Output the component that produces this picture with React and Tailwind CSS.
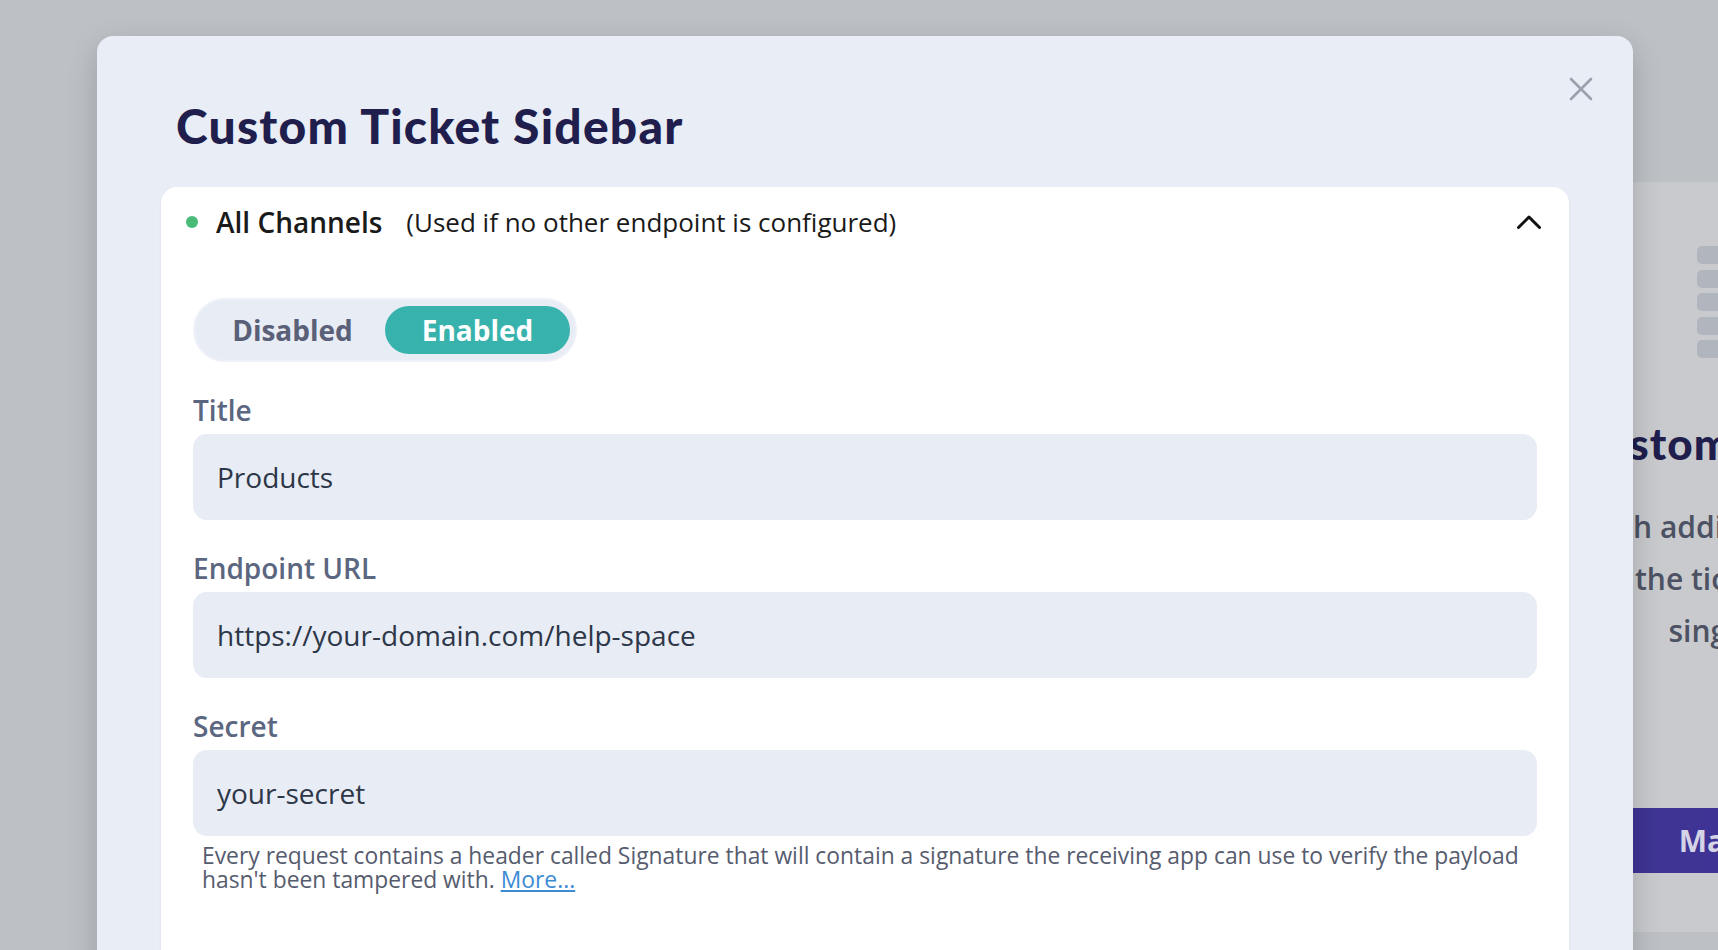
import React, { useState } from 'react';

const sans = { fontFamily: '"Open Sans", "Noto Sans", sans-serif' };
const heavy = { fontFamily: 'Lato, "Open Sans", sans-serif' };

function Field({ label, value, children }) {
  return (
    <div className="mt-7 flex flex-col">
      <label className="text-[28px] font-semibold leading-[40px] text-[#5b6680]">{label}</label>
      <div className="mt-1 flex h-[86px] items-center rounded-[14px] bg-[#e8ecf5] px-6 text-[28px] text-[#2d3748]">
        {value}
      </div>
      {children}
    </div>
  );
}

function BackgroundPage() {
  return (
    <div className="flex pl-[1420px] pt-[182px]">
      <div className="flex h-[750px] w-[772px] shrink-0 flex-col items-center rounded-2xl bg-[#c9cacd] pt-[64px] text-center">
        {/* illustration */}
        <div className="flex w-[218px] flex-col gap-[5.5px]">
          <div className="h-[18px] rounded-[5px] bg-[#b1b5bd]" />
          <div className="h-[18px] rounded-[5px] bg-[#b1b5bd]" />
          <div className="h-[18px] rounded-[5px] bg-[#b1b5bd]" />
          <div className="h-[18px] rounded-[5px] bg-[#b1b5bd]" />
          <div className="h-[18px] rounded-[5px] bg-[#b1b5bd]" />
        </div>
        <h3
          className="mt-[59px] whitespace-nowrap text-[44px] font-black leading-[1.2] tracking-[0.025em] text-[#1f1e4d]"
          style={heavy}
        >
          Custom Ticket Sidebar
        </h3>
        <p className="mt-[31px] text-[30px] font-semibold leading-[52px] text-[#4c5263]" style={sans}>
          <span className="block whitespace-nowrap">Enrich additional ticket data here{'\u00a0'}</span>
          <span className="block whitespace-nowrap">shown in the ticket sidebar for every agent</span>
          <span className="block whitespace-nowrap">single API request.{'\u00a0'}</span>
        </p>
        <button
          className="mt-[151px] flex h-[65px] w-full items-center justify-center bg-gradient-to-r from-[#3c3690] to-[#44309d] text-[30px] font-bold text-[#d5d3e6]"
          style={sans}
        >
          Manage Sidebars
        </button>
      </div>
    </div>
  );
}

export default function App() {
  const [enabled, setEnabled] = useState(true);

  return (
    <div className="relative h-[950px] w-full overflow-hidden bg-[#bdc1c6]" style={sans}>
      <BackgroundPage />

      {/* Modal */}
      <div className="absolute inset-0 flex justify-center pl-[12px] pt-[36px]">
        <div className="relative h-fit w-[1536px] shrink-0 rounded-2xl bg-[#e9edf6] px-16 pb-16 pt-[61px] shadow-[0_10px_30px_rgba(0,0,0,0.18)]">
          <button className="absolute right-[40px] top-[41px] text-[#9aa0ad]" aria-label="Close">
            <svg width="24" height="24" viewBox="0 0 24 24" fill="none" stroke="currentColor" strokeWidth="2.6" strokeLinecap="round">
              <path d="M2 2L22 22M22 2L2 22" />
            </svg>
          </button>

          <h2
            className="pl-[15px] text-[48px] font-black leading-[1.2] tracking-[0.025em] text-[#1f1e4d]"
            style={heavy}
          >
            Custom Ticket Sidebar
          </h2>

          <div className="mt-[32px] rounded-2xl bg-white pb-[140px] shadow-[0_1px_3px_rgba(0,0,0,0.06)]">
            {/* Accordion header */}
            <div className="flex items-center py-4 pl-[25px] pr-[28px]">
              <span className="h-3 w-3 rounded-full bg-[#48bb78]" />
              <span className="ml-[18px] text-[28px] font-semibold leading-[39px] text-[#1a1a1a]">All Channels</span>
              <span className="ml-6 text-[26px] leading-[39px] text-[#1a1a1a]">(Used if no other endpoint is configured)</span>
              <svg className="ml-auto" width="24" height="14" viewBox="0 0 24 14" fill="none" stroke="#111" strokeWidth="3" strokeLinecap="round" strokeLinejoin="round">
                <path d="M1.5 12.5L12 2L22.5 12.5" />
              </svg>
            </div>

            <div className="px-8 pt-[40px]">
              {/* Toggle */}
              <div className="inline-flex rounded-full border-2 border-[#eef1f7] bg-[#e8ecf5] px-[5px] py-[6px]">
                <button
                  onClick={() => setEnabled(false)}
                  className={`h-[48px] w-[185px] rounded-full text-[28px] font-bold ${
                    enabled ? 'text-[#5a6078]' : 'bg-[#38b2ac] text-white'
                  }`}
                >
                  Disabled
                </button>
                <button
                  onClick={() => setEnabled(true)}
                  className={`h-[48px] w-[185px] rounded-full text-[28px] font-bold ${
                    enabled ? 'bg-[#38b2ac] text-white' : 'text-[#5a6078]'
                  }`}
                >
                  Enabled
                </button>
              </div>

              <Field label="Title" value="Products" />
              <Field label="Endpoint URL" value="https://your-domain.com/help-space" />
              <Field label="Secret" value="your-secret">
                <p className="mt-[8px] pl-[9px] text-[22.85px] leading-[24px] text-[#565c6e]">
                  Every request contains a header called Signature that will contain a signature the receiving app can use to verify the payload hasn't been tampered with.{' '}
                  <a href="#" className="text-[#3d8bd4] underline">More...</a>
                </p>
              </Field>
            </div>
          </div>
        </div>
      </div>
    </div>
  );
}
